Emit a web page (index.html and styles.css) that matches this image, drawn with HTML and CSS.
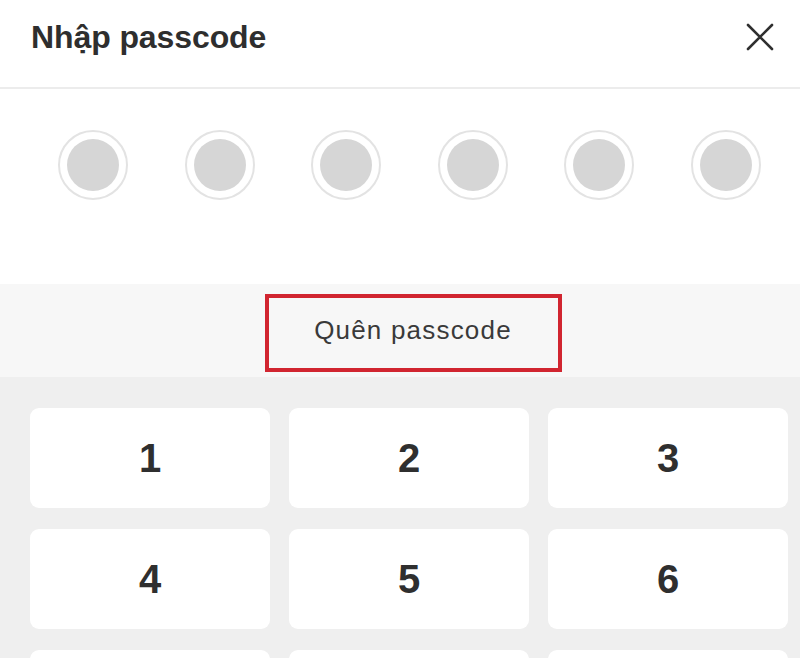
FILE: index.html
```html
<!DOCTYPE html>
<html lang="vi">
<head>
<meta charset="utf-8">
<title>Nhập passcode</title>
<link rel="stylesheet" href="styles.css">
</head>
<body>
<div class="screen">
  <header class="header">
    <h1 class="title">Nhập passcode</h1>
    <button class="close" aria-label="Đóng">
      <svg width="28" height="28" viewBox="0 0 28 28"><path d="M2 2 L26 26 M26 2 L2 26" stroke="#2f2f2f" stroke-width="2.6" stroke-linecap="round" fill="none"/></svg>
    </button>
  </header>
  <section class="dots">
    <span class="dot"><span class="fill"></span></span>
    <span class="dot"><span class="fill"></span></span>
    <span class="dot"><span class="fill"></span></span>
    <span class="dot"><span class="fill"></span></span>
    <span class="dot"><span class="fill"></span></span>
    <span class="dot"><span class="fill"></span></span>
  </section>
  <section class="forgot">
    <div class="forgot-box">Quên passcode</div>
  </section>
  <section class="keypad">
    <button class="key">1</button>
    <button class="key">2</button>
    <button class="key">3</button>
    <button class="key">4</button>
    <button class="key">5</button>
    <button class="key">6</button>
    <button class="key"></button>
    <button class="key"></button>
    <button class="key"></button>
  </section>
</div>
</body>
</html>
```

FILE: styles.css
```css
* { box-sizing: border-box; }
html, body { margin: 0; padding: 0; }
body {
  width: 800px;
  height: 658px;
  overflow: hidden;
  background: #ffffff;
  font-family: "Liberation Sans", Arial, sans-serif;
  color: #333333;
}
.screen { display: flex; flex-direction: column; height: 658px; overflow: hidden; }
.header {
  height: 89px;
  display: flex;
  align-items: center;
  justify-content: space-between;
  padding: 0 26px 0 31px;
  border-bottom: 2px solid #ececec;
  flex: none;
}
.title {
  margin: 0;
  font-size: 32px;
  font-weight: 700;
  color: #2e2e2e;
  letter-spacing: -0.1px;
  padding-bottom: 12px;
}
.close {
  border: 0;
  background: none;
  padding: 0;
  width: 28px;
  height: 28px;
  margin-bottom: 13px;
  display: flex;
}
.dots {
  height: 195px;
  flex: none;
  display: flex;
  justify-content: space-between;
  align-items: flex-start;
  padding: 41px 39px 0 58px;
}
.dot {
  width: 70px;
  height: 70px;
  border-radius: 50%;
  border: 2px solid #e3e3e3;
  display: flex;
  align-items: center;
  justify-content: center;
}
.fill {
  width: 52px;
  height: 52px;
  border-radius: 50%;
  background: #d6d6d6;
}
.forgot {
  height: 93px;
  flex: none;
  background: #f7f7f7;
  display: flex;
  align-items: center;
  justify-content: center;
  padding: 5px 0 0 26px;
}
.forgot-box {
  width: 297px;
  height: 78px;
  border: 4px solid #d12530;
  display: flex;
  align-items: center;
  justify-content: center;
  font-size: 26px;
  letter-spacing: 1.2px;
  color: #3a3a3a;
  padding-bottom: 6px;
}
.keypad {
  background: #efefef;
  display: grid;
  grid-template-columns: repeat(3, 240px);
  grid-auto-rows: 100px;
  column-gap: 19px;
  row-gap: 21px;
  padding: 31px 11px 0 30px;
  flex: 1;
  overflow: hidden;
}
.key {
  border: 0;
  background: #ffffff;
  border-radius: 9px;
  font-family: "Liberation Sans", Arial, sans-serif;
  font-size: 40px;
  font-weight: 700;
  color: #2f2f2f;
  padding: 0;
}
```
